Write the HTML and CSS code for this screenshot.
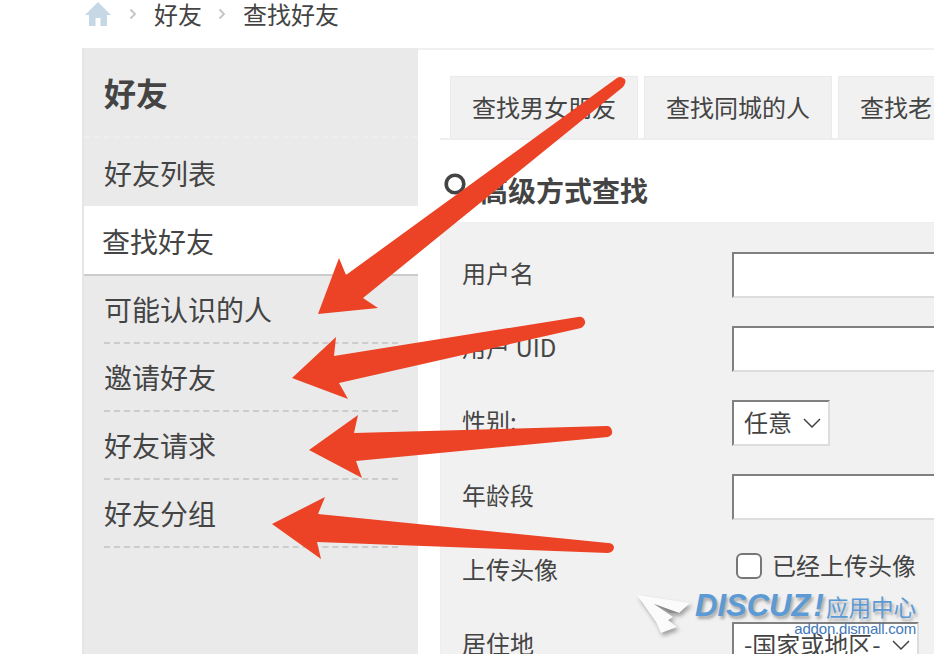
FILE: index.html
```html
<!DOCTYPE html>
<html lang="zh-CN">
<head>
    <meta charset="UTF-8">
    <meta name="viewport" content="width=device-width, initial-scale=1.0">
    <title>查找好友</title>
    <link rel="stylesheet" href="styles.css">
</head>
<body>
    <div class="breadcrumb">
        <svg class="home-icon" width="26" height="24" viewBox="0 0 26 24">
            <path d="M13 0 L26 13 H22 V24 H15.5 V16 H10.5 V24 H4 V13 H0 Z" fill="#c6d8e6"/>
        </svg>
        <svg class="crumb-sep" width="8" height="12" viewBox="0 0 8 12"><path d="M1.5 1.5 L6 6 L1.5 10.5" fill="none" stroke="#c4c4c4" stroke-width="1.8"/></svg>
        <span>好友</span>
        <svg class="crumb-sep" width="8" height="12" viewBox="0 0 8 12"><path d="M1.5 1.5 L6 6 L1.5 10.5" fill="none" stroke="#c4c4c4" stroke-width="1.8"/></svg>
        <span>查找好友</span>
    </div>

    <div class="wrap">
        <div class="sidebar">
            <h2 class="side-title">好友</h2>
            <ul class="side-list">
                <li class="side-item">好友列表</li>
                <li class="side-item active">查找好友</li>
                <li class="side-item">可能认识的人</li>
                <li class="side-item">邀请好友</li>
                <li class="side-item">好友请求</li>
                <li class="side-item">好友分组</li>
            </ul>
        </div>

        <div class="main">
            <div class="tabs">
                <div class="tab">查找男女朋友</div>
                <div class="tab">查找同城的人</div>
                <div class="tab">查找老</div>
            </div>

            <div class="section-title">
                <svg width="24" height="28" viewBox="0 0 24 28">
                    <circle cx="11" cy="11" r="8.8" fill="none" stroke="#444" stroke-width="3.6"/>
                    <path d="M17 17 L23 24" stroke="#444" stroke-width="3.6"/>
                </svg>
                <span>高级方式查找</span>
            </div>

            <div class="form-panel">
                <div class="form-row">
                    <label>用户名</label>
                    <div class="text-input"></div>
                </div>
                <div class="form-row">
                    <label>用户 UID</label>
                    <div class="text-input"></div>
                </div>
                <div class="form-row">
                    <label>性别:</label>
                    <div class="select select-small">
                        <span>任意</span>
                        <svg width="18" height="10" viewBox="0 0 18 10"><path d="M1 1 L9 9 L17 1" fill="none" stroke="#444" stroke-width="1.5"/></svg>
                    </div>
                </div>
                <div class="form-row">
                    <label>年龄段</label>
                    <div class="text-input"></div>
                </div>
                <div class="form-row">
                    <label>上传头像</label>
                    <div class="check-line">
                        <span class="checkbox"></span>
                        <span class="check-text">已经上传头像</span>
                    </div>
                </div>
                <div class="form-row">
                    <label>居住地</label>
                    <div class="select select-wide">
                        <span>-国家或地区-</span>
                        <svg width="18" height="10" viewBox="0 0 18 10"><path d="M1 1 L9 9 L17 1" fill="none" stroke="#444" stroke-width="1.5"/></svg>
                    </div>
                </div>
            </div>
        </div>
    </div>

    <!-- red arrows drawn over the screenshot -->
    <svg class="arrows" width="934" height="654" viewBox="0 0 934 654">
        <g fill="#ec4225">
            <path d="M617 78 L346 275 L339 258 L318 314 L378 308 L363 298 L623 87 Q628 80 623 78 Q620 76 617 78 Z"/>
            <path d="M578 317 L334 356 L336 337 L292 378 L348 399 L339 383 L581 328 Q586 325 585 321 Q583 316 578 317 Z"/>
            <path d="M607 426 L354 433 L358 415 L309 450 L362 478 L356 461 L608 437 Q613 435 612 431 Q611 426 607 426 Z"/>
            <path d="M318 514 L325 497 L272 524 L321 559 L317 542 L608 553 Q614 552 614 547 Q613 543 608 543 Z"/>
        </g>
    </svg>

    <!-- site watermark -->
    <div class="watermark">
        <svg class="wm-cursor" width="56" height="40" viewBox="0 0 56 40">
            <path d="M0 0 L53 8 L42 18 L17 9 L36 22 L31 25 L40 32 L24 38 L19 27 Z" fill="#fbfbfb"/>
            <path d="M17 9 L42 18 L33 18 Z" fill="#8c8c8c"/>
        </svg>
        <div class="wm-top"><span class="wm-logo">DISCUZ<i>!</i></span><span class="wm-cn">应用中心</span></div>
        <div class="wm-url">addon.dismall.com</div>
    </div>
</body>
</html>
```

FILE: styles.css
```css
html, body {
    margin: 0;
    padding: 0;
}

body {
    position: relative;
    width: 934px;
    height: 654px;
    overflow: hidden;
    background-color: #fff;
    color: #444;
    font-family: "Noto Sans CJK SC", "Noto Sans", sans-serif;
    font-size: 24px;
}

.breadcrumb {
    display: flex;
    align-items: center;
    height: 28px;
    margin-bottom: 20px;
    padding-left: 85px;
    line-height: 28px;
}

.home-icon {
    margin-right: 18px;
}

.crumb-sep {
    margin-right: 17px;
}

.breadcrumb span {
    margin-right: 16px;
}

.wrap {
    display: flex;
    margin-left: 82px;
    height: 606px;
}

/* left menu */
.sidebar {
    width: 334px;
    border-left: 2px solid #e6e6e6;
    background-color: #eaeaea;
    flex-shrink: 0;
}

.side-title {
    margin: 0;
    height: 88px;
    padding-left: 20px;
    border-bottom: 2px dashed #eeeeee;
    font-size: 32px;
    font-weight: bold;
    line-height: 88px;
}

.side-list {
    list-style: none;
    margin: 0;
    padding: 0;
}

.side-item {
    height: 66px;
    margin: 0 20px 0 20px;
    border-bottom: 2px dashed #ccc;
    font-size: 28px;
    line-height: 66px;
}

.side-item:first-child {
    border-bottom-color: transparent;
    line-height: 70px;
}

.side-item.active {
    margin: 0;
    padding-left: 18px;
    background-color: #fff;
    height: 68px;
    border-bottom: 2px solid #ccc;
    line-height: 70px;
}

/* right part, runs past the window edge */
.main {
    flex: 1;
    border-top: 2px solid #f0f0f0;
    padding-left: 22px;
    min-width: 0;
}

.tabs {
    display: flex;
    gap: 6px;
    height: 62px;
    margin-top: 26px;
    padding-left: 10px;
    border-bottom: 2px solid #eee;
    width: 600px;
}

.tab {
    flex-shrink: 0;
    padding: 0 21px;
    border: 1px solid #eaeaea;
    border-bottom: none;
    background-color: #f1f1f1;
    line-height: 60px;
}

.section-title {
    display: flex;
    align-items: center;
    box-sizing: border-box;
    height: 82px;
    padding: 18px 0 0 4px;
    font-size: 28px;
    font-weight: bold;
    width: 500px;
}

.section-title svg {
    margin: -6px 12px 0 0;
}

.form-panel {
    width: 600px;
    height: 432px;
    padding-top: 29px;
    box-sizing: border-box;
    background-color: #f1f1f1;
    border-top: 1px solid #eee;
    border-left: 1px solid #eee;
}

.form-row {
    display: flex;
    align-items: center;
    height: 46px;
    margin-bottom: 28px;
}

.form-row label {
    width: 291px;
    margin-top: -6px;
    padding-left: 21px;
    box-sizing: border-box;
    flex-shrink: 0;
}

.text-input,
.select {
    box-sizing: border-box;
    height: 46px;
    background-color: #fff;
    border-style: solid;
    border-width: 2px;
    border-color: #808080 #ddd #ddd #808080;
}

.text-input {
    width: 300px;
}

.select {
    display: flex;
    align-items: center;
    justify-content: space-between;
    padding: 0 7px 0 10px;
}

.select span {
    margin-top: -4px;
}

.select-small {
    width: 98px;
}

.select-wide {
    width: 187px;
}

.check-line {
    display: flex;
    align-items: center;
    margin: -10px 0 0 4px;
}

.checkbox {
    display: block;
    box-sizing: border-box;
    width: 26px;
    height: 26px;
    margin-right: 10px;
    border: 2px solid #777;
    border-radius: 6px;
    background-color: #fff;
}

.check-text {
    margin-top: -4px;
}

/* overlays */
.arrows {
    position: absolute;
    left: 0;
    top: 0;
}

.watermark {
    position: absolute;
    left: 637px;
    top: 590px;
    width: 281px;
    height: 50px;
    color: #5c9ad6;
}

.wm-cursor {
    position: absolute;
    left: 0;
    top: 5px;
    filter: drop-shadow(2px 3px 2px rgba(0, 0, 0, 0.35));
}

.wm-top {
    position: absolute;
    left: 58px;
    top: 0;
    display: flex;
    align-items: center;
    height: 32px;
    white-space: nowrap;
    text-shadow: 2px 3px 3px rgba(0, 0, 0, 0.3);
}

.wm-logo {
    font-family: "Liberation Sans", sans-serif;
    font-size: 31px;
    font-style: italic;
    font-weight: bold;
    width: 131px;
}

.wm-logo i {
    margin-left: 3px;
}

.wm-cn {
    font-size: 22.5px;
    line-height: 32px;
}

.wm-url {
    position: absolute;
    right: 2px;
    top: 30px;
    font-family: "Liberation Sans", sans-serif;
    font-size: 15px;
    letter-spacing: -0.2px;
    color: #3f78b8;
    white-space: nowrap;
}
```
